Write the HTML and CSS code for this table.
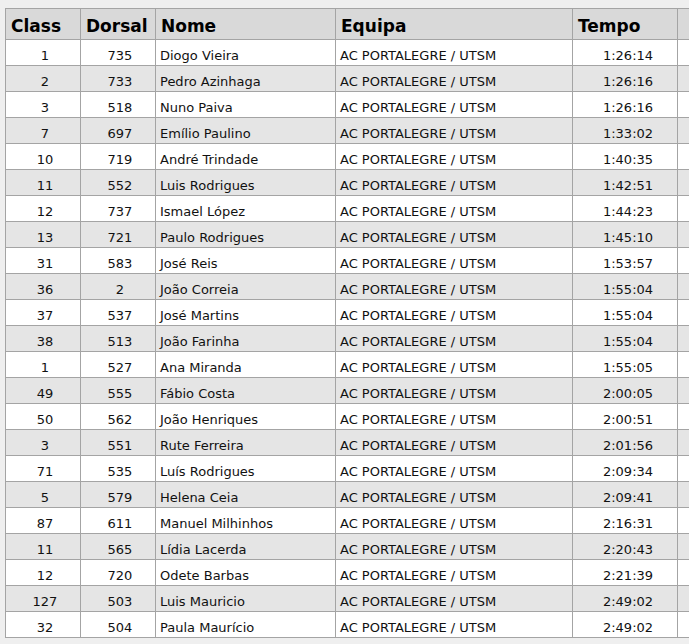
FILE: index.html
```html
<!DOCTYPE html>
<html>
<head>
<meta charset="utf-8">
<link rel="stylesheet" href="styles.css">
</head>
<body>
<table class="results">
<colgroup>
<col class="c-class"><col class="c-dorsal"><col class="c-nome"><col class="c-equipa"><col class="c-tempo"><col class="c-extra">
</colgroup>
<thead>
<tr><th>Class</th><th>Dorsal</th><th>Nome</th><th>Equipa</th><th>Tempo</th><th></th></tr>
</thead>
<tbody>
<tr><td class="num">1</td><td class="num">735</td><td>Diogo Vieira</td><td>AC PORTALEGRE / UTSM</td><td class="time">1:26:14</td><td></td></tr>
<tr><td class="num">2</td><td class="num">733</td><td>Pedro Azinhaga</td><td>AC PORTALEGRE / UTSM</td><td class="time">1:26:16</td><td></td></tr>
<tr><td class="num">3</td><td class="num">518</td><td>Nuno Paiva</td><td>AC PORTALEGRE / UTSM</td><td class="time">1:26:16</td><td></td></tr>
<tr><td class="num">7</td><td class="num">697</td><td>Emílio Paulino</td><td>AC PORTALEGRE / UTSM</td><td class="time">1:33:02</td><td></td></tr>
<tr><td class="num">10</td><td class="num">719</td><td>André Trindade</td><td>AC PORTALEGRE / UTSM</td><td class="time">1:40:35</td><td></td></tr>
<tr><td class="num">11</td><td class="num">552</td><td>Luis Rodrigues</td><td>AC PORTALEGRE / UTSM</td><td class="time">1:42:51</td><td></td></tr>
<tr><td class="num">12</td><td class="num">737</td><td>Ismael López</td><td>AC PORTALEGRE / UTSM</td><td class="time">1:44:23</td><td></td></tr>
<tr><td class="num">13</td><td class="num">721</td><td>Paulo Rodrigues</td><td>AC PORTALEGRE / UTSM</td><td class="time">1:45:10</td><td></td></tr>
<tr><td class="num">31</td><td class="num">583</td><td>José Reis</td><td>AC PORTALEGRE / UTSM</td><td class="time">1:53:57</td><td></td></tr>
<tr><td class="num">36</td><td class="num">2</td><td>João Correia</td><td>AC PORTALEGRE / UTSM</td><td class="time">1:55:04</td><td></td></tr>
<tr><td class="num">37</td><td class="num">537</td><td>José Martins</td><td>AC PORTALEGRE / UTSM</td><td class="time">1:55:04</td><td></td></tr>
<tr><td class="num">38</td><td class="num">513</td><td>João Farinha</td><td>AC PORTALEGRE / UTSM</td><td class="time">1:55:04</td><td></td></tr>
<tr><td class="num">1</td><td class="num">527</td><td>Ana Miranda</td><td>AC PORTALEGRE / UTSM</td><td class="time">1:55:05</td><td></td></tr>
<tr><td class="num">49</td><td class="num">555</td><td>Fábio Costa</td><td>AC PORTALEGRE / UTSM</td><td class="time">2:00:05</td><td></td></tr>
<tr><td class="num">50</td><td class="num">562</td><td>João Henriques</td><td>AC PORTALEGRE / UTSM</td><td class="time">2:00:51</td><td></td></tr>
<tr><td class="num">3</td><td class="num">551</td><td>Rute Ferreira</td><td>AC PORTALEGRE / UTSM</td><td class="time">2:01:56</td><td></td></tr>
<tr><td class="num">71</td><td class="num">535</td><td>Luís Rodrigues</td><td>AC PORTALEGRE / UTSM</td><td class="time">2:09:34</td><td></td></tr>
<tr><td class="num">5</td><td class="num">579</td><td>Helena Ceia</td><td>AC PORTALEGRE / UTSM</td><td class="time">2:09:41</td><td></td></tr>
<tr><td class="num">87</td><td class="num">611</td><td>Manuel Milhinhos</td><td>AC PORTALEGRE / UTSM</td><td class="time">2:16:31</td><td></td></tr>
<tr><td class="num">11</td><td class="num">565</td><td>Lídia Lacerda</td><td>AC PORTALEGRE / UTSM</td><td class="time">2:20:43</td><td></td></tr>
<tr><td class="num">12</td><td class="num">720</td><td>Odete Barbas</td><td>AC PORTALEGRE / UTSM</td><td class="time">2:21:39</td><td></td></tr>
<tr><td class="num">127</td><td class="num">503</td><td>Luis Mauricio</td><td>AC PORTALEGRE / UTSM</td><td class="time">2:49:02</td><td></td></tr>
<tr><td class="num">32</td><td class="num">504</td><td>Paula Maurício</td><td>AC PORTALEGRE / UTSM</td><td class="time">2:49:02</td><td></td></tr>
</tbody>
</table>
</body>
</html>
```
FILE: styles.css
```css
html, body {
  overflow: hidden;
}
body {
  margin: 8px 0 0 5px;
  background: #efefef;
  font-family: "DejaVu Sans", Verdana, sans-serif;
  color: #111;
}
.results {
  border-collapse: collapse;
  table-layout: fixed;
  width: 760px;
  font-size: 13px;
}
.c-class { width: 75px; }
.c-dorsal { width: 75px; }
.c-nome { width: 180px; }
.c-equipa { width: 237px; }
.c-tempo { width: 105px; }
.c-extra { width: 88px; }
.results th,
.results td {
  border: 1px solid #a4a4a4;
  overflow: hidden;
  white-space: nowrap;
}
.results th {
  height: 26px;
  padding: 4px 4px 0 5px;
  background: #d9d9d9;
  font-size: 17px;
  font-weight: bold;
  text-align: left;
  color: #000;
}
.results td {
  height: 19px;
  padding: 6px 4px 0 4px;
  background: #fff;
}
.results tbody tr:nth-child(even) td {
  background: #e5e5e5;
}
.results td.num {
  text-align: center;
  padding-left: 7px;
  padding-right: 3px;
}
.results td.time {
  text-align: center;
  padding-left: 9px;
  padding-right: 3px;
}
```
